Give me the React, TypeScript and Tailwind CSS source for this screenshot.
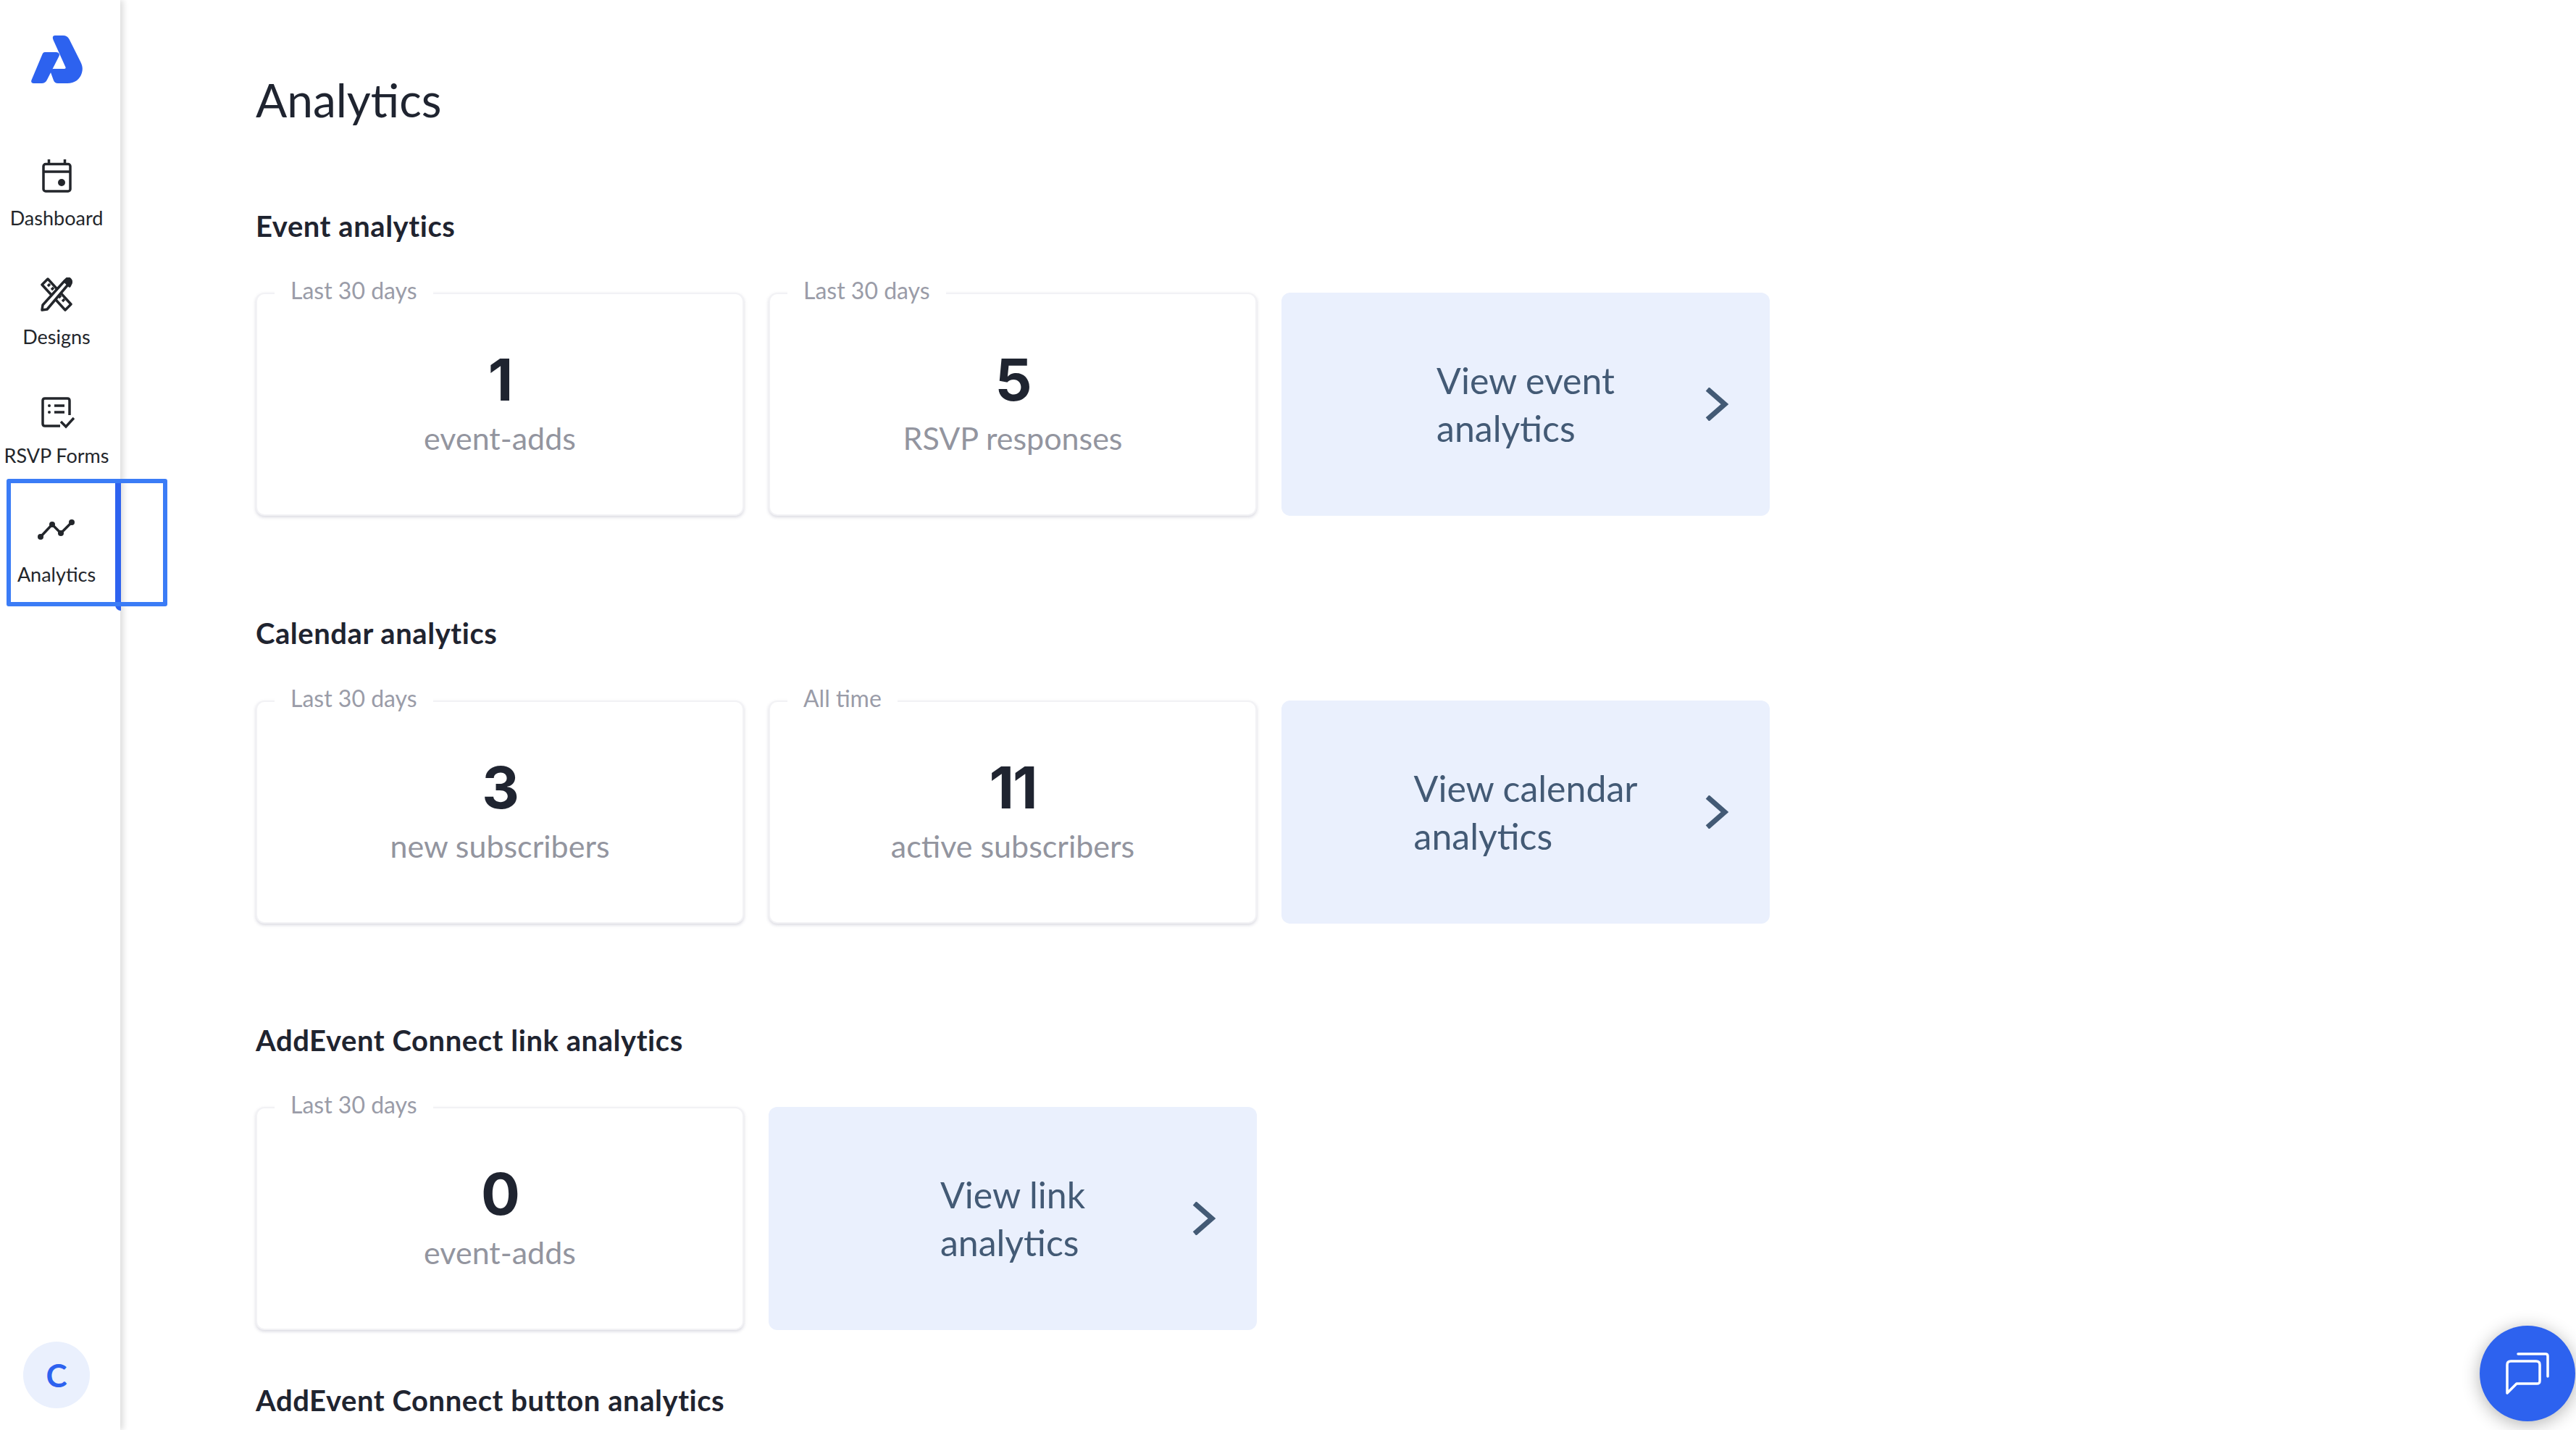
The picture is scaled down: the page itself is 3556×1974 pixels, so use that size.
import React from "react";

function Logo() {
  return (
    <svg width="71" height="66" viewBox="0 0 71 66" fill="#2d62ef">
      <path d="M19 23h15c4 0 6 2.500 4.500 5.500L22 61c-1.500 3.500-4 5-7.500 5H3.500C.5 66-.5 64 .5 61.500L15 27c1-2.500 2-4 4-4z" />
      <path d="M33 0h11c4 0 6.500 1.500 8.500 5L68 36c3 6 3.500 10 2 15.500C67.500 60.500 60 66 50 66H37c-3 0-5-1.500-6-4l-4-11c-1-3 .5-5 3.500-5H46c1.500 0 2-1 1.400-2.500L30.500 6C29 2.500 30 0 33 0z" />
    </svg>
  );
}

function CalendarIcon() {
  return (
    <svg width="41" height="46" viewBox="0 0 41 46" fill="none" stroke="#23262b" strokeWidth="3.500">
      <rect x="2" y="6.500" width="37" height="37.500" rx="3" />
      <path d="M2 17h37M9.500 0v7M31.500 0v7" />
      <circle cx="27" cy="32" r="5" fill="#23262b" stroke="none" />
    </svg>
  );
}

function DesignsIcon() {
  return (
    <svg width="44" height="47" viewBox="0 0 44 47" fill="none" stroke="#23262b" strokeWidth="3.500" strokeLinejoin="round">
      <path d="M2 10 10 2l32 35-8 8z" />
      <path d="M10 12l3-3M15 17l3-3M25 28l3-3M30 33l3-3" />
      <path d="M3 38 32 6l4-4c1.500-1.300 3-1.300 4 0l1 1c1.300 1.300 1.300 3 0 4l-4 4L9 44l-7 1z" fill="#fff" />
      <path d="M33 5l7 7 2-4c.6-2 .6-3-1-5-1.500-1.500-3-1.500-5 0z" fill="#23262b" />
    </svg>
  );
}

function FormIcon() {
  return (
    <svg width="46" height="44" viewBox="0 0 46 44" fill="none" stroke="#23262b" strokeWidth="3.500">
      <path d="M26 40H5c-2 0-3-1-3-3V5c0-2 1-3 3-3h31c2 0 3 1 3 3v20" />
      <path d="M18 12h14M18 21h14" />
      <circle cx="11" cy="12" r="2" fill="#23262b" stroke="none" />
      <circle cx="11" cy="21" r="2" fill="#23262b" stroke="none" />
      <path d="M27 34l7 7 11-12" />
    </svg>
  );
}

function TrendIcon() {
  return (
    <svg width="52" height="28" viewBox="0 0 52 28" fill="none" stroke="#23262b" strokeWidth="3.500">
      <path d="M4 24 20 7l12 12L47 4" />
      <circle cx="4" cy="24" r="4" fill="#23262b" stroke="none" />
      <circle cx="20" cy="7" r="4" fill="#23262b" stroke="none" />
      <circle cx="32" cy="19" r="4" fill="#23262b" stroke="none" />
      <circle cx="47" cy="4" r="4" fill="#23262b" stroke="none" />
    </svg>
  );
}

function Chevron() {
  return (
    <svg width="32" height="46" viewBox="0 0 32 46" fill="none" stroke="#435a75" strokeWidth="7">
      <path d="M3 2l24 21L3 44" strokeLinejoin="miter" />
    </svg>
  );
}

function ChatIcon() {
  return (
    <svg width="60" height="60" viewBox="0 0 60 60" fill="none" stroke="#fff" strokeWidth="3.500" strokeLinecap="round" strokeLinejoin="round">
      <path d="M17 3h38c2 0 3 1 3 3v28" />
      <path d="M2 57V18c0-4 2-5 5-5h35c3 0 5 1 5 5v22c0 3-1 4-4 4H15z" />
    </svg>
  );
}

function StatCard({ period, value, label }: { period: string; value: string; label: string }) {
  return (
    <div className="relative flex h-[308px] w-[674px] flex-col items-center rounded-[12px] border-2 border-[#f2f2f5] bg-white pt-[78px] shadow-[0_2px_4px_rgba(100,100,130,0.25)]">
      <span className="absolute -top-[24px] left-[24px] bg-white px-[22px] text-[32px] leading-[38px] text-[#9a9ca8]">
        {period}
      </span>
      <div className="font-['Inter',sans-serif] text-[80px] font-bold leading-[80px] tracking-[-2px] text-[#1f2430]">
        {value}
      </div>
      <div className="mt-[17px] text-[43px] leading-[48px] text-[#93959f]">{label}</div>
    </div>
  );
}

function ViewCard({ first, second }: { first: string; second: string }) {
  return (
    <div className="relative flex h-[308px] w-[674px] items-center justify-center rounded-[12px] bg-[#eaf0fd]">
      <div className="text-[50px] leading-[66px] text-[#435a75]">
        {first}
        <br />
        {second}
      </div>
      <div className="absolute right-[57px] top-[131px]">
        <Chevron />
      </div>
    </div>
  );
}

function NavItem({ icon, label, iconClass }: { icon: React.ReactNode; label: string; iconClass: string }) {
  return (
    <div className="flex h-[164px] flex-col items-center justify-end">
      <div className={`flex h-[56px] items-center justify-center ${iconClass}`}>{icon}</div>
      <div className="mt-[12px] whitespace-nowrap text-[27px] leading-[32px] text-[#23262b]">{label}</div>
    </div>
  );
}

function SectionTitle({ children, className }: { children: React.ReactNode; className: string }) {
  return (
    <h2 className={`text-[40px] font-bold leading-[44px] tracking-[0.55px] text-[#1f2430] ${className}`}>{children}</h2>
  );
}

export default function App() {
  return (
    <div className="relative flex h-screen overflow-hidden bg-white font-['Lato',sans-serif]">
      {/* Sidebar */}
      <aside className="relative z-10 flex w-[166px] shrink-0 flex-col items-center bg-white pr-[10px] pt-[49px] shadow-[4px_0_8px_rgba(0,0,0,0.14)]">
        <Logo />
        <nav className="mt-[38px] flex w-full flex-col">
          <NavItem icon={<CalendarIcon />} label="Dashboard" iconClass="-translate-y-[2px]" />
          <NavItem icon={<DesignsIcon />} label="Designs" iconClass="-translate-y-[3px]" />
          <NavItem icon={<FormIcon />} label="RSVP Forms" iconClass="translate-x-[2px] -translate-y-[3px]" />
          <NavItem icon={<TrendIcon />} label="Analytics" iconClass="-translate-y-[6px]" />
        </nav>
        <div className="mb-[30px] mt-auto flex h-[92px] w-[92px] items-center justify-center rounded-full bg-[#eaf0fd] text-[44px] font-bold text-[#2d62ef]">
          C
        </div>
        {/* active bar */}
        <div className="absolute left-[159px] top-[666px] h-[177px] w-[8px] rounded-bl-[8px] bg-[#2d62ef]" />
      </aside>

      {/* focus ring around the active item */}
      <div className="absolute left-[9px] top-[661px] z-20 h-[176px] w-[222px] rounded-[3px] border-[6px] border-[#3b7cf6]" />

      <main className="flex-1 pl-[187px] pt-[100px]">
        <h1 className="text-[64px] leading-[76px] text-[#1f2430]">Analytics</h1>

        <SectionTitle className="mt-[114px]">Event analytics</SectionTitle>
        <div className="mt-[70px] flex gap-[34px]">
          <StatCard period="Last 30 days" value="1" label="event-adds" />
          <StatCard period="Last 30 days" value="5" label="RSVP responses" />
          <ViewCard first="View event" second="analytics" />
        </div>

        <SectionTitle className="mt-[140px]">Calendar analytics</SectionTitle>
        <div className="mt-[71px] flex gap-[34px]">
          <StatCard period="Last 30 days" value="3" label="new subscribers" />
          <StatCard period="All time" value="11" label="active subscribers" />
          <ViewCard first="View calendar" second="analytics" />
        </div>

        <SectionTitle className="mt-[139px]">AddEvent Connect link analytics</SectionTitle>
        <div className="mt-[70px] flex gap-[34px]">
          <StatCard period="Last 30 days" value="0" label="event-adds" />
          <ViewCard first="View link" second="analytics" />
        </div>

        <SectionTitle className="mt-[75px]">AddEvent Connect button analytics</SectionTitle>
      </main>

      {/* chat bubble */}
      <div className="absolute bottom-[12px] right-[1px] flex h-[132px] w-[132px] items-center justify-center rounded-full bg-[#2d62ef] shadow-[0_4px_24px_rgba(0,0,0,0.3)]">
        <ChatIcon />
      </div>
    </div>
  );
}
